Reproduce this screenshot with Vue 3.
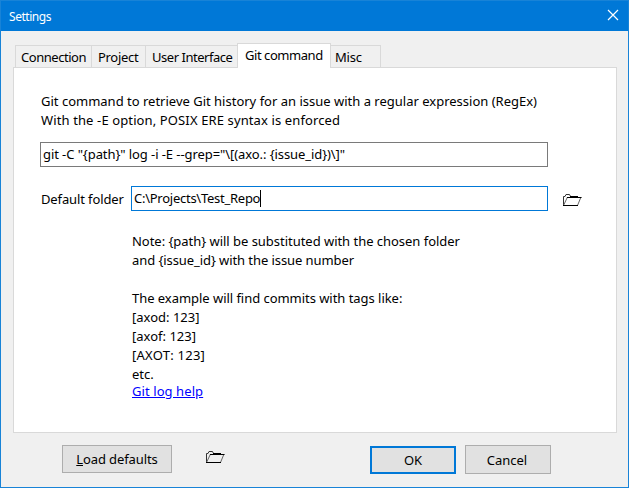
<script setup>
import { ref } from 'vue'

const tabs = [
  { label: 'Connection', id: 'connection' },
  { label: 'Project', id: 'project' },
  { label: 'User Interface', id: 'interface' },
  { label: 'Git command', id: 'git' },
  { label: 'Misc', id: 'misc' },
]
const active = ref('git')
const command = 'git -C "{path}" log -i -E --grep="\\[(axo.: {issue_id})\\]"'
const folder = 'C:\\Projects\\Test_Repo'
</script>

<template>
  <div class="window">
    <header class="titlebar">
      <span class="title">Settings</span>
      <svg class="close" width="12" height="12" viewBox="0 0 12 12">
        <path d="M1 1L11 11M11 1L1 11" stroke="#fff" stroke-width="1.2" fill="none" />
      </svg>
    </header>
    <main class="body">
      <nav class="tabs">
        <div v-for="t in tabs" :key="t.id" class="tab" :class="[t.id, { active: t.id === active }]" @click="active = t.id">
          <span>{{ t.label }}</span>
        </div>
      </nav>
      <section class="panel">
        <div class="intro">
          <div><span class="l1">Git command to retrieve Git history for an issue with a regular expression (RegEx)</span></div>
          <div><span class="l2">With the -E option, POSIX ERE syntax is enforced</span></div>
        </div>
        <div class="field command"><span class="cmd">{{ command }}</span></div>
        <div class="row">
          <span class="label">Default folder</span>
          <div class="field path"><span class="dir">{{ folder }}</span><i class="caret"></i></div>
          <svg class="folder" width="20" height="14" viewBox="0 0 20 14">
            <path d="M1.500 12V3.500H3L4 1.500H7.500L8.500 3.500" fill="none" stroke="#333" />
            <path d="M1.500 12.500L5.500 4M19 4L15.500 12.500" fill="none" stroke="#666" />
            <path d="M8 3.500H16M5 4.500H19.500M1 12.500H16" fill="none" stroke="#000" />
          </svg>
        </div>
        <div class="notes">
          <div><span class="n1">Note: {path} will be substituted with the chosen folder</span></div>
          <div><span class="n2">and {issue_id} with the issue number</span></div>
          <div class="gap"></div>
          <div><span class="n3">The example will find commits with tags like:</span></div>
          <div>[axod: 123]</div>
          <div>[axof: 123]</div>
          <div><span class="n4">[AXOT: 123]</span></div>
          <div>etc.</div>
          <a class="link">Git log help</a>
        </div>
      </section>
      <footer class="footer">
        <button class="btn load"><span><u>L</u>oad defaults</span></button>
        <svg class="folder" width="20" height="14" viewBox="0 0 20 14">
          <path d="M1.500 12V3.500H3L4 1.500H7.500L8.500 3.500" fill="none" stroke="#333" />
          <path d="M1.500 12.500L5.500 4M19 4L15.500 12.500" fill="none" stroke="#666" />
          <path d="M8 3.500H16M5 4.500H19.500M1 12.500H16" fill="none" stroke="#000" />
        </svg>
        <button class="btn ok">OK</button>
        <button class="btn cancel">Cancel</button>
      </footer>
    </main>
  </div>
</template>

<style>
body { margin: 0; }
</style>

<style scoped>
.window {
  box-sizing: border-box;
  width: 629px;
  height: 488px;
  border: 1px solid #1883d7;
  background: #f0f0f0;
  font: 13px/19px "Noto Sans", "Open Sans", sans-serif;
  color: #000;
  display: flex;
  flex-direction: column;
  white-space: nowrap;
}
.titlebar {
  height: 30px;
  background: #0078d7;
  color: #fff;
  display: flex;
  align-items: center;
  justify-content: space-between;
  padding: 0 9px 0 8px;
  font-size: 12px;
  letter-spacing: -0.45px;
}
.close { margin-top: -2px; }
.body { display: flex; flex-direction: column; padding: 12px 11px 0 12px; }
.tabs { display: flex; align-items: flex-end; height: 24px; padding-left: 2px; }
.tab {
  box-sizing: border-box;
  height: 22px;
  border: 1px solid #d9d9d9;
  border-bottom: 0;
  margin-right: -1px;
  padding: 2px 0 0 5px;
}
.connection { width: 77px; letter-spacing: -0.46px; }
.project { width: 55px; padding-left: 6px; letter-spacing: -0.3px; }
.interface { width: 93px; padding-left: 6px; letter-spacing: -0.47px; }
.git { width: 94px; letter-spacing: -0.45px; }
.misc { width: 51px; padding-left: 4px; letter-spacing: -0.2px; }
.tab.active {
  height: 25px;
  margin-bottom: -1px;
  padding: 2px 0 0 7px;
  background: #fff;
  position: relative;
}
.panel {
  box-sizing: border-box;
  width: 604px;
  height: 366px;
  border: 1px solid #d9d9d9;
  background: #fff;
  padding: 24px 26px 0;
}
.intro { padding-left: 1px; height: 50px; }
.l2 { letter-spacing: 0.12px; }
.cmd { letter-spacing: -0.08px; }
.dir { letter-spacing: -0.26px; }
.n1 { letter-spacing: -0.03px; }
.n2 { letter-spacing: -0.08px; }
.n3 { letter-spacing: -0.04px; }
.n4 { letter-spacing: 0.25px; }
.field {
  box-sizing: border-box;
  height: 25px;
  border: 1px solid #7a7a7a;
  display: flex;
  align-items: center;
  padding: 0 2px 1px;
}
.command { width: 508px; }
.row { display: flex; margin-top: 19px; padding-left: 1px; }
.label { width: 90px; padding-top: 4px; letter-spacing: -0.12px; }
.path { width: 417px; border-color: #0078d7; }
.caret { width: 1px; height: 17px; background: #000; }
.row .folder { margin: 7px 0 0 14px; }
.notes { padding: 21px 0 0 92px; }
.gap { height: 19px; }
.link { display: block; margin-top: -2px; color: #0000ff; text-decoration: underline; letter-spacing: 0.08px; }
.footer { display: flex; padding: 12px 0 0 49px; }
.btn {
  box-sizing: border-box;
  width: 86px;
  height: 29px;
  border: 1px solid #adadad;
  background: #e1e1e1;
  font: inherit;
  color: inherit;
  padding: 0;
}
.load { width: 110px; height: 28px; letter-spacing: -0.1px; }
.footer .folder { margin: 5px 0 0 33px; }
.ok { margin: 1px 0 0 145px; height: 28px; border: 2px solid #0078d7; }
.cancel { margin-left: 9px; padding: 1px 2px 0 0; }
</style>
